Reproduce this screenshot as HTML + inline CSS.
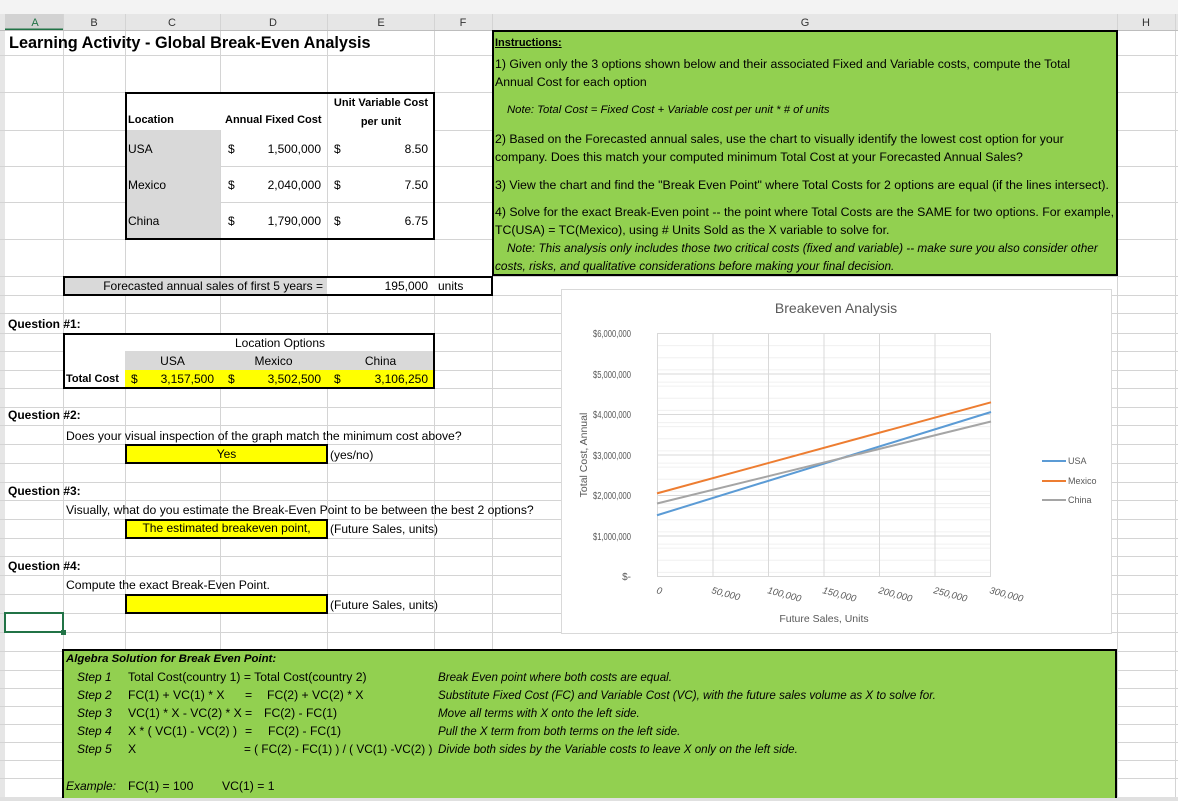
<!DOCTYPE html>
<html><head><meta charset="utf-8"><style>
*{margin:0;padding:0;box-sizing:border-box}
body{width:1178px;height:801px;position:relative;overflow:hidden;background:#fff;font-family:"Liberation Sans",sans-serif;font-size:11px;color:#000}
.a{position:absolute;white-space:nowrap}
.g{position:absolute;background:#92d050}
.y{background:#ffff00}
.gr{background:#d9d9d9}
.i{font-style:italic}
.b{font-weight:bold}
.r{text-align:right}
.c{text-align:center}
.t{font-size:12px}
.ins{font-size:12.3px}
.al{font-size:12.2px}
.ai{font-size:11.6px;font-style:italic}
</style></head><body>
<svg class="a" style="left:0;top:0" width="1178" height="801">
<rect x="0" y="0" width="1178" height="14" fill="#f3f3f3"/>
<rect x="0" y="14" width="1178" height="16" fill="#e6e6e6"/>
<rect x="5" y="14" width="58" height="16" fill="#d2d2d2"/>
<line x1="5" y1="29.5" x2="63" y2="29.5" stroke="#217346" stroke-width="2"/>
<rect x="0" y="30" width="5" height="771" fill="#e6e6e6"/>
<g stroke="#d4d4d4" stroke-width="1">
<line x1="63.5" y1="14" x2="63.5" y2="801"/><line x1="125.5" y1="14" x2="125.5" y2="801"/><line x1="220.5" y1="14" x2="220.5" y2="801"/><line x1="327.5" y1="14" x2="327.5" y2="801"/><line x1="434.5" y1="14" x2="434.5" y2="801"/><line x1="492.5" y1="14" x2="492.5" y2="801"/><line x1="1117.5" y1="14" x2="1117.5" y2="801"/><line x1="1175.5" y1="14" x2="1175.5" y2="801"/>
<line x1="0" y1="55.5" x2="1178" y2="55.5"/><line x1="0" y1="92.5" x2="1178" y2="92.5"/><line x1="0" y1="130.5" x2="1178" y2="130.5"/><line x1="0" y1="166.5" x2="1178" y2="166.5"/><line x1="0" y1="202.5" x2="1178" y2="202.5"/><line x1="0" y1="239.5" x2="1178" y2="239.5"/><line x1="0" y1="276.5" x2="1178" y2="276.5"/><line x1="0" y1="295.5" x2="1178" y2="295.5"/>
<line x1="0" y1="313.5" x2="1178" y2="313.5"/><line x1="0" y1="333.5" x2="1178" y2="333.5"/><line x1="0" y1="351.5" x2="1178" y2="351.5"/><line x1="0" y1="370.5" x2="1178" y2="370.5"/><line x1="0" y1="388.5" x2="1178" y2="388.5"/><line x1="0" y1="407.5" x2="1178" y2="407.5"/><line x1="0" y1="425.5" x2="1178" y2="425.5"/><line x1="0" y1="444.5" x2="1178" y2="444.5"/><line x1="0" y1="463.5" x2="1178" y2="463.5"/><line x1="0" y1="482.5" x2="1178" y2="482.5"/><line x1="0" y1="500.5" x2="1178" y2="500.5"/><line x1="0" y1="519.5" x2="1178" y2="519.5"/><line x1="0" y1="538.5" x2="1178" y2="538.5"/><line x1="0" y1="556.5" x2="1178" y2="556.5"/><line x1="0" y1="575.5" x2="1178" y2="575.5"/><line x1="0" y1="594.5" x2="1178" y2="594.5"/><line x1="0" y1="613.5" x2="1178" y2="613.5"/><line x1="0" y1="632.5" x2="1178" y2="632.5"/><line x1="0" y1="651.5" x2="1178" y2="651.5"/><line x1="0" y1="670.5" x2="1178" y2="670.5"/><line x1="0" y1="688.5" x2="1178" y2="688.5"/><line x1="0" y1="706.5" x2="1178" y2="706.5"/><line x1="0" y1="724.5" x2="1178" y2="724.5"/><line x1="0" y1="742.5" x2="1178" y2="742.5"/><line x1="0" y1="760.5" x2="1178" y2="760.5"/><line x1="0" y1="778.5" x2="1178" y2="778.5"/>
</g>
<line x1="0" y1="30.5" x2="1178" y2="30.5" stroke="#bdbdbd"/>
<rect x="0" y="797" width="1178" height="4" fill="#e0e0e0"/>
<g font-family="Liberation Sans" font-size="11" fill="#333" text-anchor="middle">
<text x="35" y="26" fill="#217346">A</text><text x="94" y="26">B</text><text x="172" y="26">C</text><text x="273" y="26">D</text><text x="381" y="26">E</text><text x="463" y="26">F</text><text x="805" y="26">G</text><text x="1146" y="26">H</text>
</g>
</svg>

<div class="a b" style="left:9px;top:34px;font-size:16.3px">Learning Activity - Global Break-Even Analysis</div>

<div class="a" style="left:125px;top:92px;width:310px;height:148px;background:#fff;border:2px solid #000"></div>
<div class="a gr" style="left:127px;top:130px;width:93px;height:108px"></div>
<div class="a" style="left:220px;top:130px;width:1px;height:108px;background:#d4d4d4"></div>
<div class="a" style="left:327px;top:94px;width:1px;height:144px;background:#d4d4d4"></div>
<div class="a" style="left:221px;top:166px;width:212px;height:1px;background:#d4d4d4"></div>
<div class="a" style="left:221px;top:202px;width:212px;height:1px;background:#d4d4d4"></div>
<div class="a b" style="left:128px;top:114px;font-size:11px">Location</div>
<div class="a b" style="left:225px;top:114px;font-size:11px">Annual Fixed Cost</div>
<div class="a b c" style="left:328px;top:94px;width:106px;font-size:11px;line-height:19px">Unit Variable Cost<br>per unit</div>
<div class="a t" style="left:128px;top:142px">USA</div>
<div class="a t" style="left:128px;top:178px">Mexico</div>
<div class="a t" style="left:128px;top:214px">China</div>
<div class="a t" style="left:228px;top:142px">$</div><div class="a r t" style="left:240px;top:142px;width:81px">1,500,000</div>
<div class="a t" style="left:228px;top:178px">$</div><div class="a r t" style="left:240px;top:178px;width:81px">2,040,000</div>
<div class="a t" style="left:228px;top:214px">$</div><div class="a r t" style="left:240px;top:214px;width:81px">1,790,000</div>
<div class="a t" style="left:334px;top:142px">$</div><div class="a r t" style="left:340px;top:142px;width:88px">8.50</div>
<div class="a t" style="left:334px;top:178px">$</div><div class="a r t" style="left:340px;top:178px;width:88px">7.50</div>
<div class="a t" style="left:334px;top:214px">$</div><div class="a r t" style="left:340px;top:214px;width:88px">6.75</div>

<div class="a" style="left:63px;top:276px;width:430px;height:20px;background:#fff;border:2px solid #000"></div>
<div class="a gr" style="left:65px;top:278px;width:262px;height:16px"></div>
<div class="a r t" style="left:65px;top:279px;width:258px">Forecasted annual sales of first 5 years =</div>
<div class="a r t" style="left:328px;top:279px;width:100px">195,000</div>
<div class="a t" style="left:438px;top:279px">units</div>

<div class="g" style="left:492px;top:30px;width:626px;height:246px;border:2px solid #000"></div>
<div class="a b" style="left:495px;top:37px;font-size:11px;text-decoration:underline">Instructions:</div>
<div class="a ins" style="left:495px;top:57px">1) Given only the 3 options shown below and their associated Fixed and Variable costs, compute the Total</div>
<div class="a ins" style="left:495px;top:75px">Annual Cost for each option</div>
<div class="a i" style="left:507px;top:104px;font-size:11.3px">Note:  Total Cost = Fixed Cost + Variable cost per unit * # of units</div>
<div class="a ins" style="left:495px;top:132px">2) Based on the Forecasted annual sales, use the chart to visually identify the lowest cost option for your</div>
<div class="a ins" style="left:495px;top:150px">company.  Does this match your computed minimum Total Cost at your Forecasted Annual Sales?</div>
<div class="a ins" style="left:495px;top:178px">3) View the chart and find the "Break Even Point" where Total Costs for 2 options are equal (if the lines intersect).</div>
<div class="a ins" style="left:495px;top:205px">4) Solve for the exact Break-Even point -- the point where Total Costs are the SAME for two options.  For example,</div>
<div class="a ins" style="left:495px;top:223px">TC(USA) = TC(Mexico), using # Units Sold as the X variable to solve for.</div>
<div class="a i" style="left:507px;top:241px;font-size:11.8px">Note:  This analysis only includes those two critical costs (fixed and variable) -- make sure you also consider other</div>
<div class="a i" style="left:495px;top:259px;font-size:11.8px">costs, risks, and qualitative considerations before making your final decision.</div>

<div class="a b" style="left:8px;top:317px;font-size:12px">Question #1:</div>
<div class="a" style="left:63px;top:333px;width:372px;height:56px;background:#fff;border:2px solid #000"></div>
<div class="a gr" style="left:125px;top:351px;width:308px;height:19px"></div>
<div class="a y" style="left:125px;top:370px;width:308px;height:17px"></div>
<div class="a c t" style="left:125px;top:336px;width:310px">Location Options</div>
<div class="a c t" style="left:125px;top:354px;width:95px">USA</div>
<div class="a c t" style="left:220px;top:354px;width:107px">Mexico</div>
<div class="a c t" style="left:327px;top:354px;width:107px">China</div>
<div class="a b" style="left:66px;top:373px">Total Cost</div>
<div class="a t" style="left:131px;top:372px">$</div><div class="a r t" style="left:140px;top:372px;width:74px">3,157,500</div>
<div class="a t" style="left:228px;top:372px">$</div><div class="a r t" style="left:240px;top:372px;width:81px">3,502,500</div>
<div class="a t" style="left:334px;top:372px">$</div><div class="a r t" style="left:340px;top:372px;width:88px">3,106,250</div>

<div class="a b" style="left:8px;top:408px;font-size:12px">Question #2:</div>
<div class="a al" style="left:66px;top:429px">Does your visual inspection of the graph match the minimum cost above?</div>
<div class="a y c t" style="left:125px;top:444px;width:203px;height:20px;border:2px solid #000;line-height:16px">Yes</div>
<div class="a t" style="left:330px;top:448px">(yes/no)</div>

<div class="a b" style="left:8px;top:484px;font-size:12px">Question #3:</div>
<div class="a al" style="left:66px;top:503px">Visually, what do you estimate the Break-Even Point to be between the best 2 options?</div>
<div class="a y c t" style="left:125px;top:519px;width:203px;height:20px;border:2px solid #000;line-height:15px">The estimated breakeven point,</div>
<div class="a t" style="left:330px;top:522px">(Future Sales, units)</div>

<div class="a b" style="left:8px;top:559px;font-size:12px">Question #4:</div>
<div class="a al" style="left:66px;top:578px">Compute the exact Break-Even Point.</div>
<div class="a y" style="left:125px;top:594px;width:203px;height:20px;border:2px solid #000"></div>
<div class="a t" style="left:330px;top:598px">(Future Sales, units)</div>
<div class="a" style="left:4px;top:612px;width:60px;height:21px;border:2px solid #217346"></div>
<div class="a" style="left:61px;top:630px;width:5px;height:5px;background:#217346"></div>

<svg class="a" style="left:561px;top:289px" width="552" height="345" viewBox="561 289 552 345">
<rect x="561.5" y="289.5" width="550" height="344" fill="#fff" stroke="#d9d9d9"/>
<g stroke="#f0f0f0">
<line x1="657" x2="991" y1="345.6" y2="345.6"/><line x1="657" x2="991" y1="357.8" y2="357.8"/><line x1="657" x2="991" y1="369.9" y2="369.9"/><line x1="657" x2="991" y1="382.1" y2="382.1"/>
<line x1="657" x2="991" y1="386.1" y2="386.1"/><line x1="657" x2="991" y1="398.3" y2="398.3"/><line x1="657" x2="991" y1="410.4" y2="410.4"/><line x1="657" x2="991" y1="422.6" y2="422.6"/>
<line x1="657" x2="991" y1="426.6" y2="426.6"/><line x1="657" x2="991" y1="438.8" y2="438.8"/><line x1="657" x2="991" y1="450.9" y2="450.9"/><line x1="657" x2="991" y1="463.1" y2="463.1"/>
<line x1="657" x2="991" y1="467.1" y2="467.1"/><line x1="657" x2="991" y1="479.3" y2="479.3"/><line x1="657" x2="991" y1="491.4" y2="491.4"/><line x1="657" x2="991" y1="503.6" y2="503.6"/>
<line x1="657" x2="991" y1="507.6" y2="507.6"/><line x1="657" x2="991" y1="519.8" y2="519.8"/><line x1="657" x2="991" y1="531.9" y2="531.9"/><line x1="657" x2="991" y1="544.1" y2="544.1"/>
<line x1="657" x2="991" y1="548.1" y2="548.1"/><line x1="657" x2="991" y1="560.3" y2="560.3"/><line x1="657" x2="991" y1="572.4" y2="572.4"/>
</g>
<g stroke="#d9d9d9">
<line x1="657" x2="991" y1="333.5" y2="333.5"/><line x1="657" x2="991" y1="374" y2="374"/><line x1="657" x2="991" y1="414.5" y2="414.5"/><line x1="657" x2="991" y1="455" y2="455"/><line x1="657" x2="991" y1="495.5" y2="495.5"/><line x1="657" x2="991" y1="536" y2="536"/><line x1="657" x2="991" y1="576.5" y2="576.5"/>
<line x1="657.5" x2="657.5" y1="333" y2="577"/><line x1="713" x2="713" y1="333" y2="577"/><line x1="768.5" x2="768.5" y1="333" y2="577"/><line x1="824" x2="824" y1="333" y2="577"/><line x1="879.5" x2="879.5" y1="333" y2="577"/><line x1="935" x2="935" y1="333" y2="577"/><line x1="990.5" x2="990.5" y1="333" y2="577"/>
</g>
<line x1="657" y1="515.25" x2="991" y2="412.0" stroke="#5b9bd5" stroke-width="2"/>
<line x1="657" y1="493.4" x2="991" y2="402.3" stroke="#ed7d31" stroke-width="2"/>
<line x1="657" y1="503.5" x2="991" y2="421.5" stroke="#a5a5a5" stroke-width="2"/>
<text x="836" y="313" font-family="Liberation Sans" font-size="14" fill="#595959" text-anchor="middle">Breakeven Analysis</text>
<g font-family="Liberation Sans" font-size="10" fill="#595959">
<text x="593" y="337" textLength="38" lengthAdjust="spacingAndGlyphs">$6,000,000</text>
<text x="593" y="378" textLength="38" lengthAdjust="spacingAndGlyphs">$5,000,000</text>
<text x="593" y="418" textLength="38" lengthAdjust="spacingAndGlyphs">$4,000,000</text>
<text x="593" y="459" textLength="38" lengthAdjust="spacingAndGlyphs">$3,000,000</text>
<text x="593" y="499" textLength="38" lengthAdjust="spacingAndGlyphs">$2,000,000</text>
<text x="593" y="540" textLength="38" lengthAdjust="spacingAndGlyphs">$1,000,000</text>
<text x="631" y="580" text-anchor="end">$-</text>
</g>
<g font-family="Liberation Sans" font-size="9.5" fill="#595959" font-style="italic">
<text transform="translate(656,593) rotate(15)">0</text>
<text transform="translate(711,593) rotate(15)">50,000</text>
<text transform="translate(767,593) rotate(15)">100,000</text>
<text transform="translate(822,593) rotate(15)">150,000</text>
<text transform="translate(878,593) rotate(15)">200,000</text>
<text transform="translate(933,593) rotate(15)">250,000</text>
<text transform="translate(989,593) rotate(15)">300,000</text>
</g>
<text x="824" y="622" font-family="Liberation Sans" font-size="10.5" fill="#595959" text-anchor="middle">Future Sales, Units</text>
<text transform="translate(587,455) rotate(-90)" font-family="Liberation Sans" font-size="10.5" fill="#595959" text-anchor="middle">Total Cost, Annual</text>
<line x1="1042" x2="1066" y1="461" y2="461" stroke="#5b9bd5" stroke-width="2"/>
<line x1="1042" x2="1066" y1="481" y2="481" stroke="#ed7d31" stroke-width="2"/>
<line x1="1042" x2="1066" y1="500" y2="500" stroke="#a5a5a5" stroke-width="2"/>
<g font-family="Liberation Sans" font-size="9" fill="#595959">
<text x="1068" y="464">USA</text><text x="1068" y="484">Mexico</text><text x="1068" y="503">China</text>
</g>
</svg>

<div class="g" style="left:62px;top:649px;width:1055px;height:149px;border:2px solid #000;border-bottom:none"></div>
<div class="a b i" style="left:66px;top:653px;font-size:11.4px">Algebra Solution for Break Even Point:</div>
<div class="a ai" style="left:77px;top:670px;font-size:12px">Step 1</div><div class="a al" style="left:128px;top:670px">Total Cost(country 1) = Total Cost(country 2)</div>
<div class="a ai" style="left:77px;top:688px;font-size:12px">Step 2</div><div class="a al" style="left:128px;top:688px">FC(1) + VC(1) * X</div><div class="a al" style="left:245px;top:688px">=</div><div class="a al" style="left:267px;top:688px">FC(2) + VC(2) * X</div>
<div class="a ai" style="left:77px;top:706px;font-size:12px">Step 3</div><div class="a al" style="left:128px;top:706px">VC(1) * X - VC(2) * X</div><div class="a al" style="left:245px;top:706px">=</div><div class="a al" style="left:264px;top:706px">FC(2) - FC(1)</div>
<div class="a ai" style="left:77px;top:724px;font-size:12px">Step 4</div><div class="a al" style="left:128px;top:724px">X * ( VC(1) - VC(2) )</div><div class="a al" style="left:245px;top:724px">=</div><div class="a al" style="left:268px;top:724px">FC(2) - FC(1)</div>
<div class="a ai" style="left:77px;top:742px;font-size:12px">Step 5</div><div class="a al" style="left:128px;top:742px">X</div><div class="a" style="left:244px;top:742px;font-size:11.8px">= ( FC(2) - FC(1) ) / ( VC(1) -VC(2) )</div>
<div class="a ai" style="left:438px;top:671px">Break Even point where both costs are equal.</div>
<div class="a ai" style="left:438px;top:689px">Substitute Fixed Cost (FC) and Variable Cost (VC), with the future sales volume as X to solve for.</div>
<div class="a ai" style="left:438px;top:707px">Move all terms with X onto the left side.</div>
<div class="a ai" style="left:438px;top:725px">Pull the X term from both terms on the left side.</div>
<div class="a ai" style="left:438px;top:743px">Divide both sides by the Variable costs to leave X only on the left side.</div>
<div class="a ai" style="left:66px;top:779px;font-size:12px">Example:</div><div class="a al" style="left:128px;top:779px">FC(1) = 100</div><div class="a al" style="left:222px;top:779px">VC(1) = 1</div>
</body></html>
